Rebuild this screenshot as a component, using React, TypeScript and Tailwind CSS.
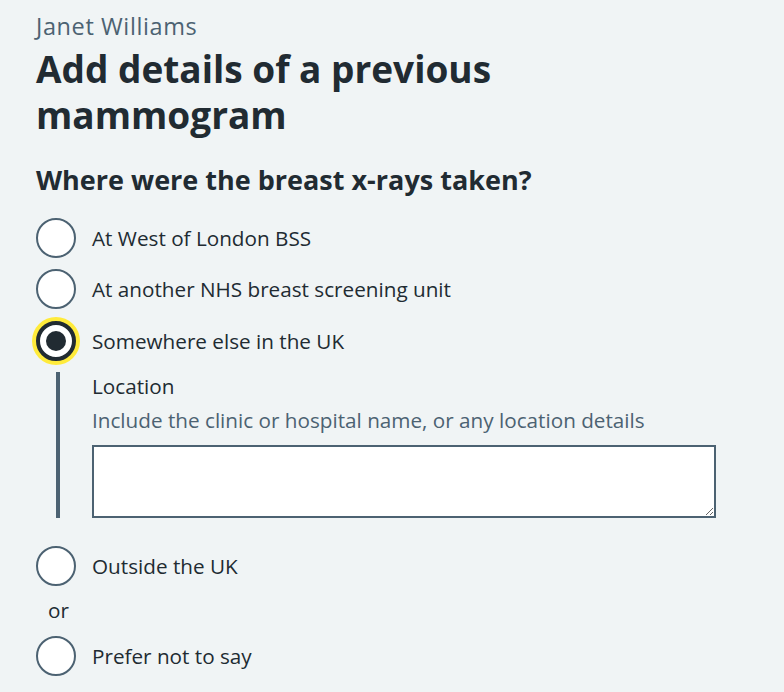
const font = { fontFamily: '"Open Sans", "Liberation Sans", sans-serif' };

function Radio({ label, checked = false }: { label: string; checked?: boolean }) {
  return (
    <div className="flex items-center gap-[16px] h-[40px]">
      {checked ? (
        <span className="relative flex h-[40px] w-[40px] shrink-0 items-center justify-center rounded-full border-4 border-[#212b32] bg-white shadow-[0_0_0_4px_#ffeb3b]">
          <span className="h-[20px] w-[20px] rounded-full bg-[#212b32]" />
        </span>
      ) : (
        <span className="h-[40px] w-[40px] shrink-0 rounded-full border-2 border-[#4c6272] bg-white" />
      )}
      <span className="text-[20.7px] leading-[28px] text-[#212b32]">{label}</span>
    </div>
  );
}

export default function App() {
  return (
    <div className="min-h-screen w-full bg-[#f0f4f5] pl-[36px] pt-[10px]" style={font}>
      <p className="text-[23.5px] leading-[32px] tracking-[0.6px] text-[#4c6272]">Janet Williams</p>
      <h1 className="mt-[4px] w-[480px] text-[37px] font-bold leading-[46px] text-[#212b32]">
        Add details of a previous mammogram
      </h1>
      <h2 className="mt-[24px] text-[27px] font-bold leading-[36px] text-[#212b32]">
        Where were the breast x-rays taken?
      </h2>
      <div className="mt-[20px] flex flex-col">
        <Radio label="At West of London BSS" />
        <div className="mt-[11px]">
          <Radio label="At another NHS breast screening unit" />
        </div>
        <div className="mt-[12px]">
          <Radio checked label="Somewhere else in the UK" />
        </div>
        <div className="mt-[11px] ml-[20px] border-l-4 border-[#4c6272] pl-[32px]">
          <p className="text-[20.7px] leading-[28px] text-[#212b32]">Location</p>
          <p className="mt-[6px] text-[20.7px] leading-[28px] text-[#4c6272]">
            Include the clinic or hospital name, or any location details
          </p>
          <textarea
            className="mt-[11px] block h-[73px] w-[624px] border-2 border-[#4c6272] bg-white outline-none"
            rows={3}
          />
        </div>
        <div className="mt-[28px]">
          <Radio label="Outside the UK" />
        </div>
        <p className="ml-[12px] mt-[10px] text-[20.7px] leading-[28px] text-[#212b32]">or</p>
        <div className="mt-[12px]">
          <Radio label="Prefer not to say" />
        </div>
      </div>
    </div>
  );
}
